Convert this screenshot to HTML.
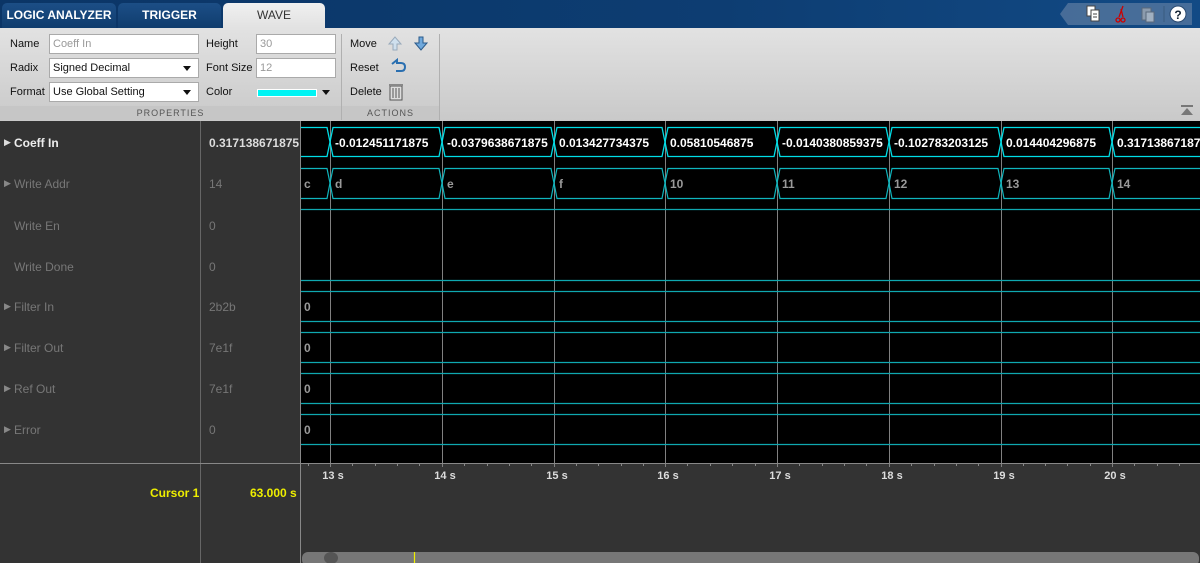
<!DOCTYPE html>
<html><head><meta charset="utf-8">
<style>
*{margin:0;padding:0;box-sizing:border-box}
body{width:1200px;height:563px;overflow:hidden;background:#333;font-family:"Liberation Sans",Arial,sans-serif;font-size:12px;position:relative}
.abs{position:absolute}
#top{left:0;top:0;width:1200px;height:28px;background:linear-gradient(90deg,#0b3566 0%,#0d3d72 60%,#124a85 100%)}
.tab{position:absolute;top:3px;height:25px;border-radius:5px 5px 0 0;font-weight:bold;font-size:12px;color:#fff;text-align:center;line-height:25px;background:linear-gradient(#1c4e86,#103d6e)}
#tb{left:0;top:28px;width:1200px;height:93px;background:linear-gradient(#e2e2e2,#c9c9c9)}
.lbl{position:absolute;font-size:11px;color:#111}
.in{position:absolute;height:20px;background:#fff;border:1px solid #aaa;font-size:11px;line-height:18px;padding-left:3px;color:#999}
.dd{color:#111}
.dd:after{content:"";position:absolute;right:7px;top:7px;border-left:4px solid transparent;border-right:4px solid transparent;border-top:5px solid #111}
.sec{position:absolute;top:106px;height:14px;font-size:9px;letter-spacing:1px;color:#555;text-align:center;background:#c6c6c6;line-height:14px}
.nm{position:absolute;left:14px;font-size:12px;color:#777}
.tri{position:absolute;left:4px;font-size:9px;color:#888}
.vl{position:absolute;left:209px;font-size:12px;color:#777}
</style></head><body>
<div id="top" class="abs"></div>
<div class="tab" style="left:2px;width:114px">LOGIC ANALYZER</div>
<div class="tab" style="left:118px;width:103px">TRIGGER</div>
<div class="tab" style="left:223px;width:102px;background:linear-gradient(#f0f0f0,#e2e2e2);color:#333;font-weight:normal">WAVE</div>
<svg class="abs" style="left:1060px;top:3px" width="132" height="22">
<polygon points="0,11 8,0 132,0 132,22 8,22" fill="#5a7aa0" opacity="0.75"/>
<g transform="translate(27,3)"><rect x="0" y="0" width="8" height="10" fill="#fff" stroke="#444"/><rect x="4" y="4" width="8" height="11" fill="#fff" stroke="#444"/><line x1="6" y1="8" x2="10" y2="8" stroke="#444"/><line x1="6" y1="11" x2="10" y2="11" stroke="#444"/></g>
<g transform="translate(55,3)" stroke="#c00" fill="none" stroke-width="1.3"><line x1="8" y1="0" x2="4" y2="11"/><line x1="6" y1="3" x2="8" y2="11"/><circle cx="3" cy="14" r="2"/><circle cx="8" cy="14" r="2"/></g>
<g transform="translate(82,3)" opacity="0.6"><rect x="0" y="2" width="9" height="12" fill="#bbb" stroke="#666"/><rect x="4" y="6" width="8" height="10" fill="#ddd" stroke="#666"/></g>
<line x1="104" y1="3" x2="104" y2="19" stroke="#3a5a80"/>
<circle cx="118" cy="11" r="8" fill="#fff" stroke="#2a4a70"/><text x="118" y="16" font-size="12" font-weight="bold" text-anchor="middle" fill="#123">?</text>
</svg>
<div id="tb" class="abs"></div>
<div class="lbl" style="left:10px;top:38px">Name</div>
<div class="in" style="left:49px;top:34px;width:150px">Coeff In</div>
<div class="lbl" style="left:10px;top:62px">Radix</div>
<div class="in dd" style="left:49px;top:58px;width:150px">Signed Decimal</div>
<div class="lbl" style="left:10px;top:86px">Format</div>
<div class="in dd" style="left:49px;top:82px;width:150px">Use Global Setting</div>
<div class="lbl" style="left:206px;top:38px">Height</div>
<div class="in" style="left:256px;top:34px;width:80px">30</div>
<div class="lbl" style="left:206px;top:62px">Font Size</div>
<div class="in" style="left:256px;top:58px;width:80px">12</div>
<div class="lbl" style="left:206px;top:86px">Color</div>
<div class="abs" style="left:257px;top:89px;width:60px;height:8px;background:#00f4f4;border:1px solid #fff"></div>
<div class="abs" style="left:322px;top:90px;border-left:4px solid transparent;border-right:4px solid transparent;border-top:5px solid #111"></div>
<div class="abs" style="left:341px;top:34px;width:1px;height:86px;background:#b0b0b0"></div>
<div class="abs" style="left:439px;top:34px;width:1px;height:86px;background:#b0b0b0"></div>
<div class="lbl" style="left:350px;top:38px">Move</div>
<div class="lbl" style="left:350px;top:62px">Reset</div>
<div class="lbl" style="left:350px;top:86px">Delete</div>
<svg class="abs" style="left:386px;top:34px" width="48" height="72">
<path d="M9,3 L3,10 L7,10 L7,16 L11,16 L11,10 L15,10 Z" fill="#cfe0ee" stroke="#9ab"/>
<path d="M35,16 L29,9 L33,9 L33,3 L37,3 L37,9 L41,9 Z" fill="#6fa8dc" stroke="#2a5a8a"/>
<path d="M6,30 L11,26 L11,29 L15,29 Q19,29 19,33 Q19,37 15,37 L10,37" fill="none" stroke="#2a6fb0" stroke-width="2"/>
<rect x="4" y="52" width="12" height="14" fill="#ddd" stroke="#555"/><rect x="3" y="50" width="14" height="2" fill="#888"/>
<line x1="7" y1="54" x2="7" y2="64" stroke="#555"/><line x1="10" y1="54" x2="10" y2="64" stroke="#555"/><line x1="13" y1="54" x2="13" y2="64" stroke="#555"/>
</svg>
<div class="sec" style="left:0;width:341px">PROPERTIES</div>
<div class="sec" style="left:342px;width:97px">ACTIONS</div>
<svg class="abs" style="left:1180px;top:104px" width="14" height="12"><rect x="1" y="1" width="12" height="2" fill="#777"/><polygon points="7,4 1,11 13,11" fill="#777"/></svg>

<div class="abs" style="left:0;top:121px;width:1200px;height:442px;background:#333"></div>
<div class="abs" style="left:200px;top:121px;width:1px;height:442px;background:#666"></div>
<div class="tri" style="top:137px;color:#ddd">&#9654;</div><div class="nm" style="top:136px;color:#eee;font-weight:bold">Coeff In</div><div class="vl" style="top:136px;color:#ddd;font-weight:bold">0.317138671875</div>
<div class="tri" style="top:178px">&#9654;</div><div class="nm" style="top:177px">Write Addr</div><div class="vl" style="top:177px">14</div>
<div class="nm" style="top:219px">Write En</div><div class="vl" style="top:219px">0</div>
<div class="nm" style="top:260px">Write Done</div><div class="vl" style="top:260px">0</div>
<div class="tri" style="top:301px">&#9654;</div><div class="nm" style="top:300px">Filter In</div><div class="vl" style="top:300px">2b2b</div>
<div class="tri" style="top:342px">&#9654;</div><div class="nm" style="top:341px">Filter Out</div><div class="vl" style="top:341px">7e1f</div>
<div class="tri" style="top:383px">&#9654;</div><div class="nm" style="top:382px">Ref Out</div><div class="vl" style="top:382px">7e1f</div>
<div class="tri" style="top:424px">&#9654;</div><div class="nm" style="top:423px">Error</div><div class="vl" style="top:423px">0</div>
<div class="abs" style="left:150px;top:486px;font-size:12px;font-weight:bold;color:#ee0">Cursor 1</div>
<div class="abs" style="left:250px;top:486px;font-size:12px;font-weight:bold;color:#ee0">63.000 s</div>

<svg class="abs" style="left:0;top:0" width="1200" height="563" font-family="Liberation Sans, Arial, sans-serif">
<rect x="301" y="121" width="899" height="342" fill="#000"/>
<line x1="300.5" y1="121" x2="300.5" y2="563" stroke="#888"/>
<g stroke="#808080" stroke-width="1">
<line x1="330.5" y1="121" x2="330.5" y2="467"/><line x1="442.5" y1="121" x2="442.5" y2="467"/><line x1="554.5" y1="121" x2="554.5" y2="467"/><line x1="665.5" y1="121" x2="665.5" y2="467"/><line x1="777.5" y1="121" x2="777.5" y2="467"/><line x1="889.5" y1="121" x2="889.5" y2="467"/><line x1="1001.5" y1="121" x2="1001.5" y2="467"/><line x1="1112.5" y1="121" x2="1112.5" y2="467"/>
</g>
<line x1="0" y1="463.5" x2="1200" y2="463.5" stroke="#888"/>
<g stroke="#888">
<line x1="308.5" y1="463" x2="308.5" y2="466"/>
<line x1="352.5" y1="463" x2="352.5" y2="466"/><line x1="375.5" y1="463" x2="375.5" y2="466"/><line x1="397.5" y1="463" x2="397.5" y2="466"/><line x1="419.5" y1="463" x2="419.5" y2="466"/>
<line x1="464.5" y1="463" x2="464.5" y2="466"/><line x1="487.5" y1="463" x2="487.5" y2="466"/><line x1="509.5" y1="463" x2="509.5" y2="466"/><line x1="531.5" y1="463" x2="531.5" y2="466"/>
<line x1="576.5" y1="463" x2="576.5" y2="466"/><line x1="598.5" y1="463" x2="598.5" y2="466"/><line x1="621.5" y1="463" x2="621.5" y2="466"/><line x1="643.5" y1="463" x2="643.5" y2="466"/>
<line x1="687.5" y1="463" x2="687.5" y2="466"/><line x1="710.5" y1="463" x2="710.5" y2="466"/><line x1="732.5" y1="463" x2="732.5" y2="466"/><line x1="755.5" y1="463" x2="755.5" y2="466"/>
<line x1="799.5" y1="463" x2="799.5" y2="466"/><line x1="822.5" y1="463" x2="822.5" y2="466"/><line x1="844.5" y1="463" x2="844.5" y2="466"/><line x1="866.5" y1="463" x2="866.5" y2="466"/>
<line x1="911.5" y1="463" x2="911.5" y2="466"/><line x1="934.5" y1="463" x2="934.5" y2="466"/><line x1="956.5" y1="463" x2="956.5" y2="466"/><line x1="978.5" y1="463" x2="978.5" y2="466"/>
<line x1="1023.5" y1="463" x2="1023.5" y2="466"/><line x1="1045.5" y1="463" x2="1045.5" y2="466"/><line x1="1067.5" y1="463" x2="1067.5" y2="466"/><line x1="1090.5" y1="463" x2="1090.5" y2="466"/>
<line x1="1134.5" y1="463" x2="1134.5" y2="466"/><line x1="1157.5" y1="463" x2="1157.5" y2="466"/><line x1="1179.5" y1="463" x2="1179.5" y2="466"/>
</g>
<g font-size="11" font-weight="bold" fill="#ddd" text-anchor="middle">
<text x="333" y="479">13 s</text><text x="445" y="479">14 s</text><text x="557" y="479">15 s</text><text x="668" y="479">16 s</text><text x="780" y="479">17 s</text><text x="892" y="479">18 s</text><text x="1004" y="479">19 s</text><text x="1115" y="479">20 s</text>
</g>
<g fill="none" stroke="#00dde6" stroke-width="1.3">
<polyline points="301,127.5 327,127.5 330,142 327,156.5 301,156.5"/>
<polygon points="330,142 333,127.5 439,127.5 442,142 439,156.5 333,156.5"/>
<polygon points="442,142 445,127.5 551,127.5 554,142 551,156.5 445,156.5"/>
<polygon points="554,142 557,127.5 662,127.5 665,142 662,156.5 557,156.5"/>
<polygon points="665,142 668,127.5 774,127.5 777,142 774,156.5 668,156.5"/>
<polygon points="777,142 780,127.5 886,127.5 889,142 886,156.5 780,156.5"/>
<polygon points="889,142 892,127.5 998,127.5 1001,142 998,156.5 892,156.5"/>
<polygon points="1001,142 1004,127.5 1109,127.5 1112,142 1109,156.5 1004,156.5"/>
<polyline points="1205,127.5 1115,127.5 1112,142 1115,156.5 1205,156.5"/>
</g>
<g font-size="12" font-weight="bold" fill="#fff">
<text x="335" y="147">-0.012451171875</text><text x="447" y="147">-0.0379638671875</text><text x="559" y="147">0.013427734375</text><text x="670" y="147">0.05810546875</text><text x="782" y="147">-0.0140380859375</text><text x="894" y="147">-0.102783203125</text><text x="1006" y="147">0.014404296875</text><text x="1117" y="147">0.317138671875</text>
</g>
<g fill="none" stroke="#0fb5bd" stroke-width="1.2">
<polyline points="301,168.5 327,168.5 330,183 327,198.5 301,198.5"/>
<polygon points="330,183 333,168.5 439,168.5 442,183 439,198.5 333,198.5"/>
<polygon points="442,183 445,168.5 551,168.5 554,183 551,198.5 445,198.5"/>
<polygon points="554,183 557,168.5 662,168.5 665,183 662,198.5 557,198.5"/>
<polygon points="665,183 668,168.5 774,168.5 777,183 774,198.5 668,198.5"/>
<polygon points="777,183 780,168.5 886,168.5 889,183 886,198.5 780,198.5"/>
<polygon points="889,183 892,168.5 998,168.5 1001,183 998,198.5 892,198.5"/>
<polygon points="1001,183 1004,168.5 1109,168.5 1112,183 1109,198.5 1004,198.5"/>
<polyline points="1205,168.5 1115,168.5 1112,183 1115,198.5 1205,198.5"/>
</g>
<g font-size="12" font-weight="bold" fill="#999">
<text x="304" y="188">c</text><text x="335" y="188">d</text><text x="447" y="188">e</text><text x="559" y="188">f</text><text x="670" y="188">10</text><text x="782" y="188">11</text><text x="894" y="188">12</text><text x="1006" y="188">13</text><text x="1117" y="188">14</text>
</g>
<g stroke="#0fa8b0" stroke-width="1.2">
<line x1="301" y1="209.5" x2="1200" y2="209.5"/>
<line x1="301" y1="280.5" x2="1200" y2="280.5"/>
<line x1="301" y1="291.5" x2="1200" y2="291.5"/><line x1="301" y1="321.5" x2="1200" y2="321.5"/>
<line x1="301" y1="332.5" x2="1200" y2="332.5"/><line x1="301" y1="362.5" x2="1200" y2="362.5"/>
<line x1="301" y1="373.5" x2="1200" y2="373.5"/><line x1="301" y1="403.5" x2="1200" y2="403.5"/>
<line x1="301" y1="414.5" x2="1200" y2="414.5"/><line x1="301" y1="444.5" x2="1200" y2="444.5"/>
</g>
<g font-size="12" font-weight="bold" fill="#999">
<text x="304" y="311">0</text><text x="304" y="352">0</text><text x="304" y="393">0</text><text x="304" y="434">0</text>
</g>
<rect x="302" y="552" width="897" height="14" rx="6" fill="#777"/>
<ellipse cx="331" cy="558" rx="7" ry="6" fill="#555"/>
<line x1="414.5" y1="552" x2="414.5" y2="563" stroke="#ee0" stroke-width="1.2"/>
</svg>
</body></html>
